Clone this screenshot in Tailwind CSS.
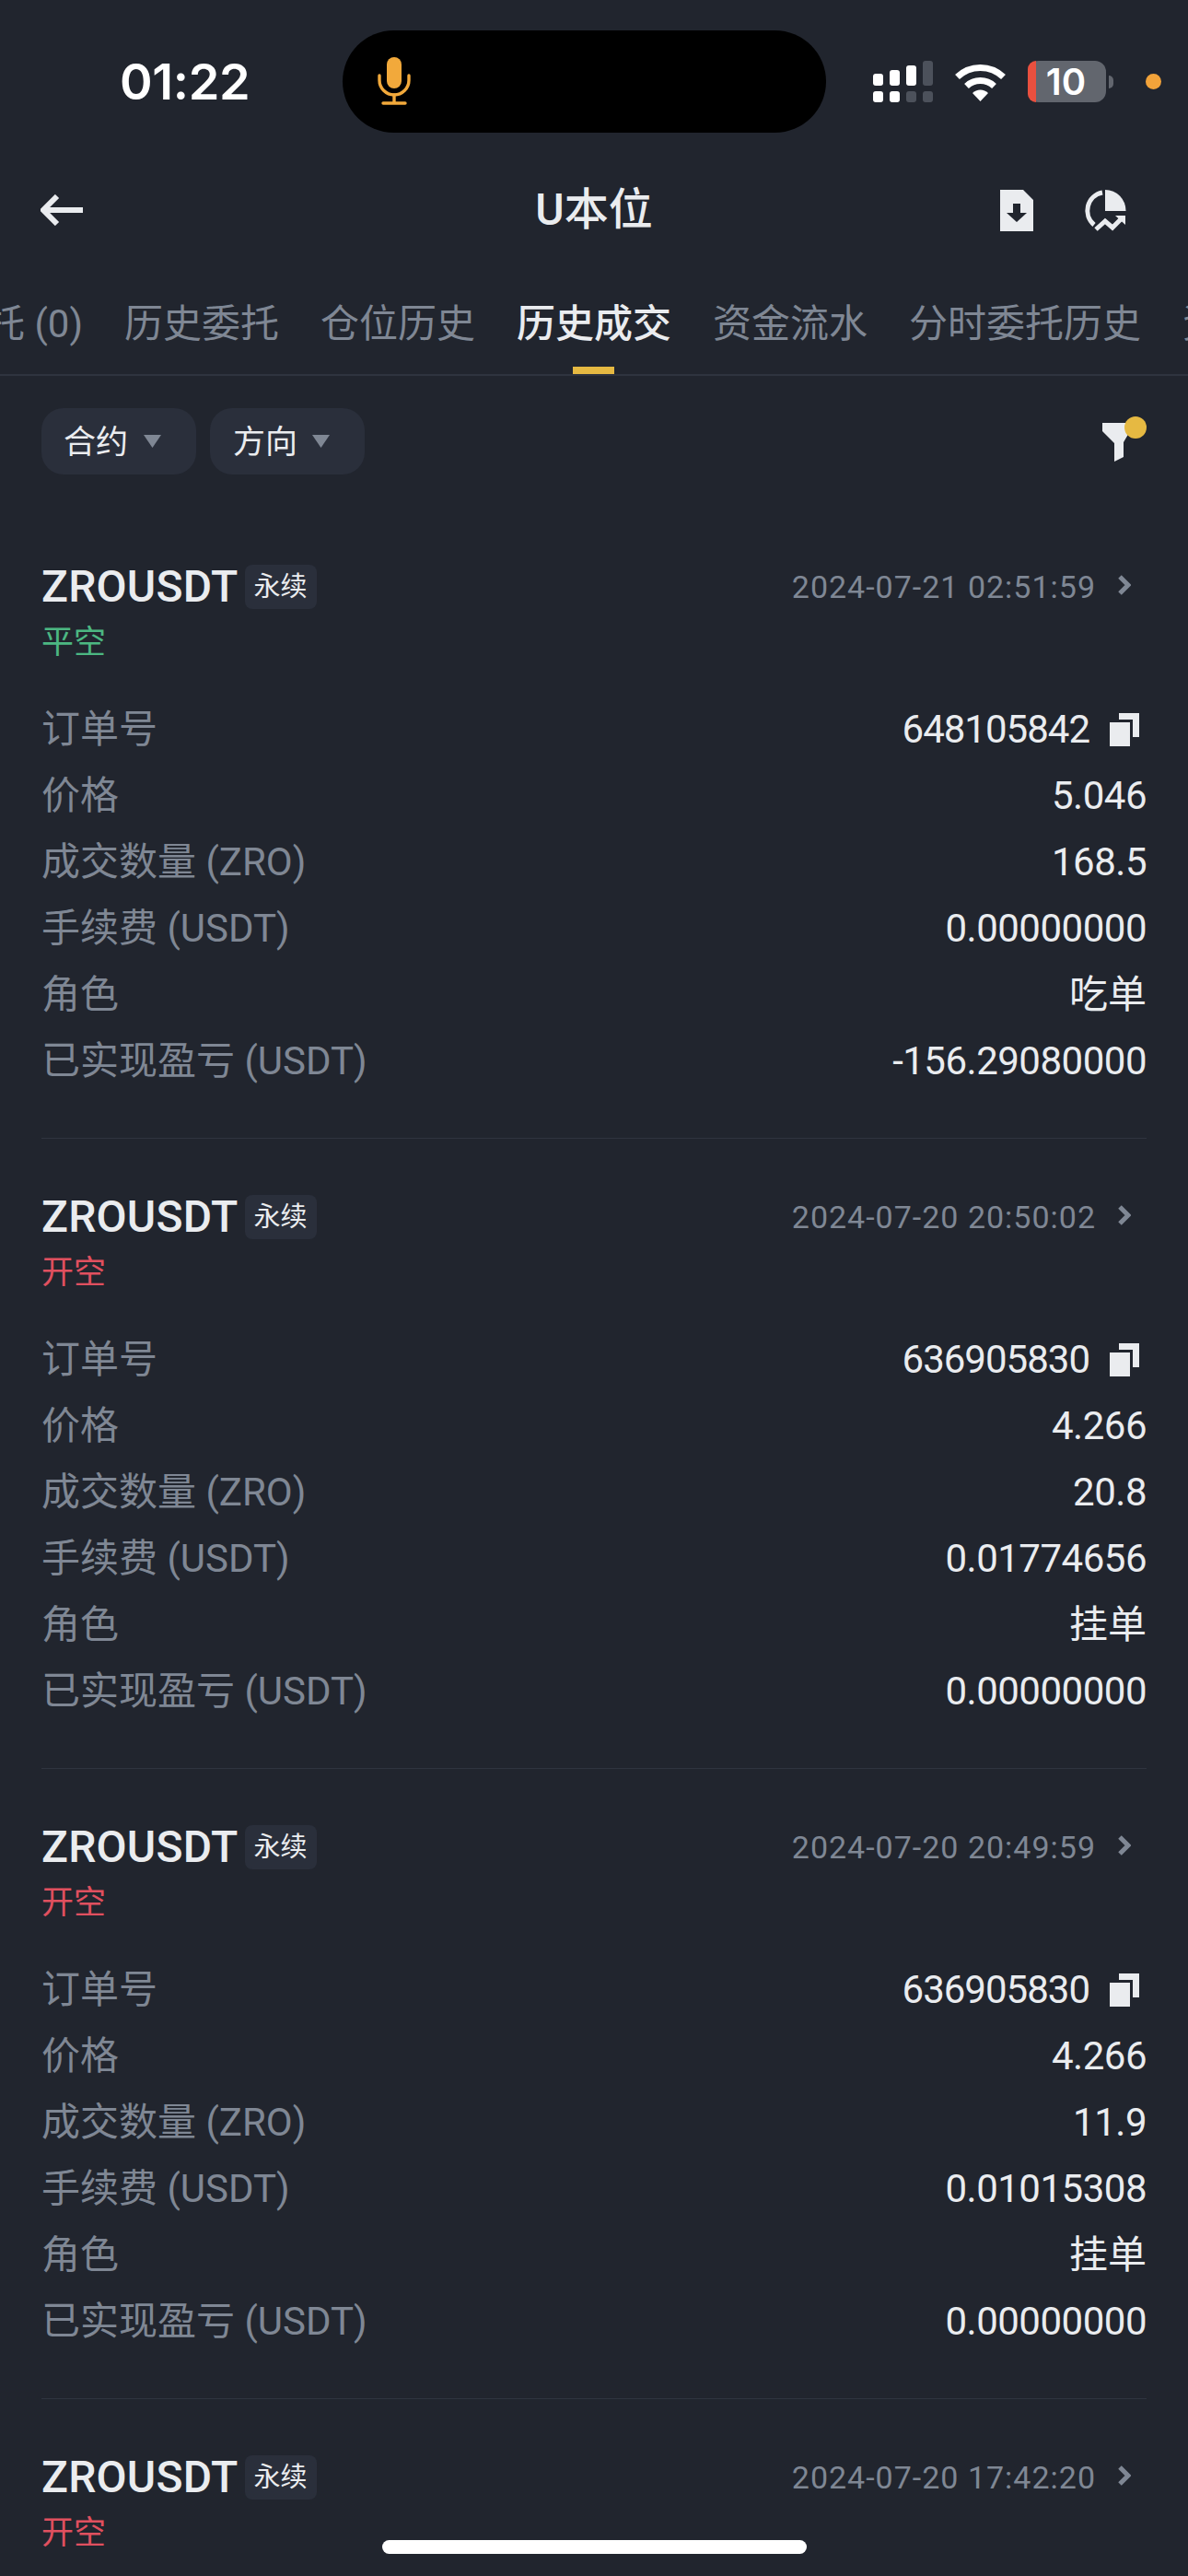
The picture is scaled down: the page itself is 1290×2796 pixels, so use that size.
<!DOCTYPE html>
<html lang="zh-CN">
<head>
    <meta charset="UTF-8">
    <meta name="viewport" content="width=device-width, initial-scale=1.0">
    <title>U本位</title>
    <script src="https://cdn.jsdelivr.net/npm/@tailwindcss/browser@4"></script>
</head>
<body class="bg-[#21252e] font-['Roboto','Noto_Sans_CJK_SC',sans-serif] text-[#eaecef] antialiased">
<div class="relative w-[1290px] h-[2796px] overflow-hidden">

    <!-- status bar -->
    <div class="flex items-center h-[111px] mt-[33px] pl-[130px]">
        <div class="w-[242px] text-[54px] font-['Inter'] font-semibold text-white leading-none tracking-[-0.3px]">01:22</div>
        <div class="w-[525px] h-[111px] bg-black rounded-[56px] flex items-center pl-[38px]">
            <svg class="w-[36px] h-[54px]" viewBox="0 0 36 54" fill="none">
                <rect x="10" y="0" width="16" height="34" rx="8" fill="#f2a93b"/>
                <path d="M2 20v5a16 16 0 0 0 32 0v-5" stroke="#f2a93b" stroke-width="3.4" stroke-linecap="round"/>
                <path d="M18 41v9M6 50h24" stroke="#f2a93b" stroke-width="3.4" stroke-linecap="round"/>
            </svg>
        </div>
        <svg class="ml-[51px] w-[65px] h-[45px]" viewBox="0 0 65 45">
            <rect x="0" y="14" width="11" height="13" rx="3" fill="#fff"/>
            <rect x="18" y="10" width="11" height="17" rx="3" fill="#fff"/>
            <rect x="36" y="5" width="11" height="22" rx="3" fill="#fff"/>
            <rect x="54" y="0" width="11" height="27" rx="3" fill="#4c515b"/>
            <rect x="0" y="33" width="11" height="12" rx="3" fill="#fff"/>
            <rect x="18" y="33" width="11" height="12" rx="3" fill="#fff"/>
            <rect x="36" y="33" width="11" height="12" rx="3" fill="#4c515b"/>
            <rect x="54" y="33" width="11" height="12" rx="3" fill="#4c515b"/>
        </svg>
        <svg class="ml-[23px] w-[57px] h-[42px]" viewBox="0 0 57 42" fill="none">
            <path d="M3.500 15.500a36 36 0 0 1 50 0" stroke="#fff" stroke-width="7"/>
            <path d="M13.500 25.500a22 22 0 0 1 30 0" stroke="#fff" stroke-width="7"/>
            <path d="M20 33l8.500 9 8.500-9a12 12 0 0 0-17 0z" fill="#fff"/>
        </svg>
        <div class="ml-[23px] w-[85px] h-[45px] rounded-[12px] bg-[#62666e] flex">
            <div class="w-[9px] rounded-l-[12px] bg-[#e9503f]"></div>
            <div class="flex-1 text-center pr-[11px] text-[40px] leading-[45px] font-['Inter'] font-semibold text-white">10</div>
        </div>
        <div class="ml-[3px] w-[5px] h-[14px] rounded-r-full bg-[#62666e]"></div>
        <div class="ml-[35px] w-[17px] h-[17px] rounded-full bg-[#f2a33a]"></div>
    </div>

    <!-- nav -->
    <div class="flex items-center h-[104px] mt-[32px] pl-[44px]">
        <svg class="w-[46px] h-[34px]" viewBox="0 0 46 34" fill="none">
            <path d="M18 2L3 17l15 15M4 17h42" stroke="#eaecef" stroke-width="6"/>
        </svg>
        <div class="w-[996px] pl-[114px] text-center text-[48px] font-medium leading-none">U本位</div>
        <svg class="w-[36px] h-[45px]" viewBox="0 0 36 45">
            <path fill-rule="evenodd" d="M0 0h25l11 11v34H0zM14 15h8v10h7L18 35 7 25h7z" fill="#eaecef"/>
        </svg>
        <svg class="ml-[55px] w-[46px] h-[45px]" viewBox="0 0 46 45" fill="none">
            <path d="M23 0a22.500 22.500 0 0 1 22.500 23H23z" fill="#eaecef"/>
            <path d="M20 3A20 20 0 0 0 11 38" stroke="#eaecef" stroke-width="5"/>
            <path d="M13 43l10-9 8 7 11-11" stroke="#eaecef" stroke-width="5"/>
            <path d="M34 28h11v10z" fill="#eaecef"/>
        </svg>
    </div>

    <!-- tabs -->
    <div class="relative h-[128px] border-b-[2px] border-[#2f343f] overflow-hidden">
        <div class="flex gap-[45px] pt-[48px] text-[42px] leading-[48px] text-[#7f8794] whitespace-nowrap ml-[-141px]">
            <span>当前委托 (0)</span>
            <span>历史委托</span>
            <span>仓位历史</span>
            <span class="relative h-[78px] text-[#eaecef] font-medium">历史成交
                <span class="absolute left-[61px] bottom-0 w-[45px] h-[8px] bg-[#e6b942]"></span>
            </span>
            <span>资金流水</span>
            <span>分时委托历史</span>
            <span>资产</span>
        </div>
    </div>

    <!-- filters -->
    <div class="flex items-center gap-[15px] mt-[35px] px-[45px]">
        <button class="flex items-center w-[168px] h-[72px] pl-[24px] rounded-[24px] bg-[#2a2f3b] text-[35px]"><span class="pt-[4px]">合约</span>
            <svg class="ml-[17px] w-[19px] h-[14px]" viewBox="0 0 19 14"><path d="M0 0h19L9.500 14z" fill="#7f8794"/></svg>
        </button>
        <button class="flex items-center w-[168px] h-[72px] pl-[25px] rounded-[24px] bg-[#2a2f3b] text-[35px]"><span class="pt-[4px]">方向</span>
            <svg class="ml-[16px] w-[19px] h-[14px]" viewBox="0 0 19 14"><path d="M0 0h19L9.500 14z" fill="#7f8794"/></svg>
        </button>
        <div class="relative ml-auto w-[48px] h-[72px]">
            <svg class="absolute left-0 top-[16px] w-[30px] h-[42px]" viewBox="0 0 30 42"><path d="M0 0h30v9L23 21v16l-10 5V22L0 9z" fill="#eaecef"/></svg>
            <div class="absolute left-[24px] top-[9px] w-[24px] h-[24px] rounded-full bg-[#e6b942]"></div>
        </div>
    </div>

    <div class="mt-[37px]">

        <!-- card 1 -->
        <div class="mx-[45px] pt-[61px] pb-[47px] border-b-[1px] border-[#2f343f]">
            <div class="flex items-center h-[48px]">
                <span class="text-[48px] font-medium leading-none tracking-[0.2px]">ZROUSDT</span>
                <span class="ml-[7px] w-[78px] h-[48px] rounded-[8px] bg-[#2a2f3b] text-[29px] leading-[48px] text-center">永续</span>
                <span class="ml-auto text-[34px] tracking-[1px] text-[#7f8794]">2024-07-21 02:51:59</span>
                <svg class="ml-[23px] mr-[17px] w-[15px] h-[22px] mb-[4px]" viewBox="0 0 15 22" fill="none"><path d="M3 2l9 9-9 9" stroke="#7f8794" stroke-width="5"/></svg>
            </div>
            <div class="mt-[13px] h-[48px] text-[35px] leading-[48px] text-[#4cb782]">平空</div>
            <div class="mt-[34px] text-[42px] leading-[72px]">
                <div class="flex justify-between h-[72px]"><span class="text-[#7f8794]">订单号</span>
                    <span class="flex items-center tracking-[-1px]">648105842
                        <svg class="ml-[22px] mr-[8px] w-[32px] h-[36px]" viewBox="0 0 32 36"><path d="M0 10h22v26H0z" fill="#eaecef"/><path d="M10 0h22v26h-7V7H10z" fill="#eaecef"/></svg>
                    </span></div>
                <div class="flex justify-between h-[72px]"><span class="text-[#7f8794]">价格</span><span class="tracking-[-0.5px]">5.046</span></div>
                <div class="flex justify-between h-[72px]"><span class="text-[#7f8794]">成交数量 (ZRO)</span><span class="tracking-[-0.5px]">168.5</span></div>
                <div class="flex justify-between h-[72px]"><span class="text-[#7f8794]">手续费 (USDT)</span><span class="tracking-[-0.5px]">0.00000000</span></div>
                <div class="flex justify-between h-[72px]"><span class="text-[#7f8794]">角色</span><span>吃单</span></div>
                <div class="flex justify-between h-[72px]"><span class="text-[#7f8794]">已实现盈亏 (USDT)</span><span class="tracking-[-0.5px]">-156.29080000</span></div>
            </div>
        </div>

        <!-- card 2 -->
        <div class="mx-[45px] pt-[61px] pb-[47px] border-b-[1px] border-[#2f343f]">
            <div class="flex items-center h-[48px]">
                <span class="text-[48px] font-medium leading-none tracking-[0.2px]">ZROUSDT</span>
                <span class="ml-[7px] w-[78px] h-[48px] rounded-[8px] bg-[#2a2f3b] text-[29px] leading-[48px] text-center">永续</span>
                <span class="ml-auto text-[34px] tracking-[1px] text-[#7f8794]">2024-07-20 20:50:02</span>
                <svg class="ml-[23px] mr-[17px] w-[15px] h-[22px] mb-[4px]" viewBox="0 0 15 22" fill="none"><path d="M3 2l9 9-9 9" stroke="#7f8794" stroke-width="5"/></svg>
            </div>
            <div class="mt-[13px] h-[48px] text-[35px] leading-[48px] text-[#e0505f]">开空</div>
            <div class="mt-[34px] text-[42px] leading-[72px]">
                <div class="flex justify-between h-[72px]"><span class="text-[#7f8794]">订单号</span>
                    <span class="flex items-center tracking-[-1px]">636905830
                        <svg class="ml-[22px] mr-[8px] w-[32px] h-[36px]" viewBox="0 0 32 36"><path d="M0 10h22v26H0z" fill="#eaecef"/><path d="M10 0h22v26h-7V7H10z" fill="#eaecef"/></svg>
                    </span></div>
                <div class="flex justify-between h-[72px]"><span class="text-[#7f8794]">价格</span><span class="tracking-[-0.5px]">4.266</span></div>
                <div class="flex justify-between h-[72px]"><span class="text-[#7f8794]">成交数量 (ZRO)</span><span class="tracking-[-0.5px]">20.8</span></div>
                <div class="flex justify-between h-[72px]"><span class="text-[#7f8794]">手续费 (USDT)</span><span class="tracking-[-0.5px]">0.01774656</span></div>
                <div class="flex justify-between h-[72px]"><span class="text-[#7f8794]">角色</span><span>挂单</span></div>
                <div class="flex justify-between h-[72px]"><span class="text-[#7f8794]">已实现盈亏 (USDT)</span><span class="tracking-[-0.5px]">0.00000000</span></div>
            </div>
        </div>

        <!-- card 3 -->
        <div class="mx-[45px] pt-[61px] pb-[47px] border-b-[1px] border-[#2f343f]">
            <div class="flex items-center h-[48px]">
                <span class="text-[48px] font-medium leading-none tracking-[0.2px]">ZROUSDT</span>
                <span class="ml-[7px] w-[78px] h-[48px] rounded-[8px] bg-[#2a2f3b] text-[29px] leading-[48px] text-center">永续</span>
                <span class="ml-auto text-[34px] tracking-[1px] text-[#7f8794]">2024-07-20 20:49:59</span>
                <svg class="ml-[23px] mr-[17px] w-[15px] h-[22px] mb-[4px]" viewBox="0 0 15 22" fill="none"><path d="M3 2l9 9-9 9" stroke="#7f8794" stroke-width="5"/></svg>
            </div>
            <div class="mt-[13px] h-[48px] text-[35px] leading-[48px] text-[#e0505f]">开空</div>
            <div class="mt-[34px] text-[42px] leading-[72px]">
                <div class="flex justify-between h-[72px]"><span class="text-[#7f8794]">订单号</span>
                    <span class="flex items-center tracking-[-1px]">636905830
                        <svg class="ml-[22px] mr-[8px] w-[32px] h-[36px]" viewBox="0 0 32 36"><path d="M0 10h22v26H0z" fill="#eaecef"/><path d="M10 0h22v26h-7V7H10z" fill="#eaecef"/></svg>
                    </span></div>
                <div class="flex justify-between h-[72px]"><span class="text-[#7f8794]">价格</span><span class="tracking-[-0.5px]">4.266</span></div>
                <div class="flex justify-between h-[72px]"><span class="text-[#7f8794]">成交数量 (ZRO)</span><span class="tracking-[-0.5px]">11.9</span></div>
                <div class="flex justify-between h-[72px]"><span class="text-[#7f8794]">手续费 (USDT)</span><span class="tracking-[-0.5px]">0.01015308</span></div>
                <div class="flex justify-between h-[72px]"><span class="text-[#7f8794]">角色</span><span>挂单</span></div>
                <div class="flex justify-between h-[72px]"><span class="text-[#7f8794]">已实现盈亏 (USDT)</span><span class="tracking-[-0.5px]">0.00000000</span></div>
            </div>
        </div>

        <!-- card 4, runs off the screen -->
        <div class="mx-[45px] pt-[61px]">
            <div class="flex items-center h-[48px]">
                <span class="text-[48px] font-medium leading-none tracking-[0.2px]">ZROUSDT</span>
                <span class="ml-[7px] w-[78px] h-[48px] rounded-[8px] bg-[#2a2f3b] text-[29px] leading-[48px] text-center">永续</span>
                <span class="ml-auto text-[34px] tracking-[1px] text-[#7f8794]">2024-07-20 17:42:20</span>
                <svg class="ml-[23px] mr-[17px] w-[15px] h-[22px] mb-[4px]" viewBox="0 0 15 22" fill="none"><path d="M3 2l9 9-9 9" stroke="#7f8794" stroke-width="5"/></svg>
            </div>
            <div class="mt-[13px] h-[48px] text-[35px] leading-[48px] text-[#e0505f]">开空</div>
        </div>
    </div>

    <!-- home indicator -->
    <div class="absolute left-[415px] bottom-[24px] w-[461px] h-[15px] rounded-full bg-white"></div>
</div>
</body>
</html>
